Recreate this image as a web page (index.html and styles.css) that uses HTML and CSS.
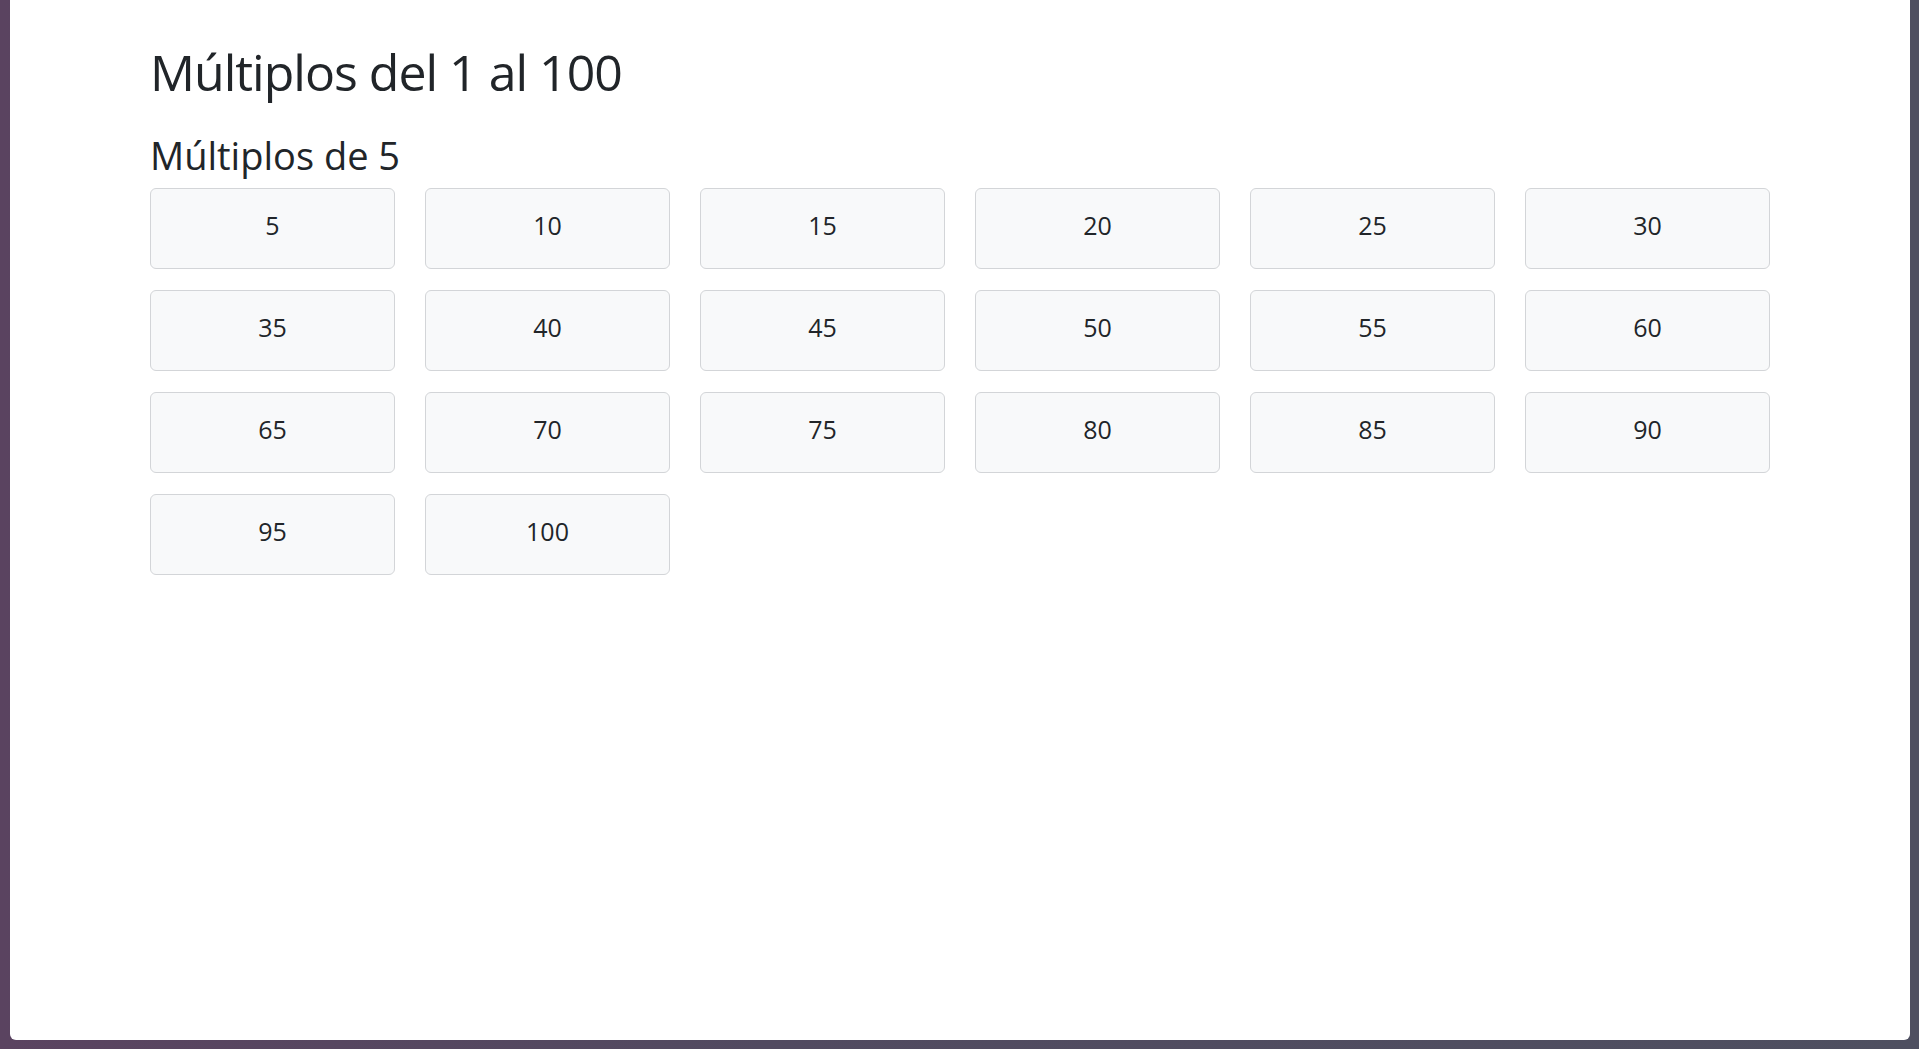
FILE: index.html
```html
<!DOCTYPE html>
<html lang="es">
<head>
<meta charset="utf-8">
<title>Múltiplos del 1 al 100</title>
<link rel="stylesheet" href="styles.css">
</head>
<body>
<div class="window">
  <main class="container">
    <h1 class="title">Múltiplos del 1 al 100</h1>
    <h3 class="subtitle">Múltiplos de 5</h3>
    <div class="grid">
      <button class="num">5</button>
      <button class="num">10</button>
      <button class="num">15</button>
      <button class="num">20</button>
      <button class="num">25</button>
      <button class="num">30</button>
      <button class="num">35</button>
      <button class="num">40</button>
      <button class="num">45</button>
      <button class="num">50</button>
      <button class="num">55</button>
      <button class="num">60</button>
      <button class="num">65</button>
      <button class="num">70</button>
      <button class="num">75</button>
      <button class="num">80</button>
      <button class="num">85</button>
      <button class="num">90</button>
      <button class="num">95</button>
      <button class="num">100</button>
    </div>
  </main>
</div>
</body>
</html>
```
FILE: styles.css
```css
html, body {
  margin: 0;
  padding: 0;
  height: 1049px;
  overflow: hidden;
}
body {
  background: linear-gradient(to right, #5a4360 0%, #514a60 40%, #4e4f60 100%);
  font-family: "Open Sans", "Noto Sans", sans-serif;
  color: #212529;
}
.window {
  margin: 0 9px 0 10px;
  height: 1040px;
  background: #ffffff;
  border-radius: 0 0 6px 6px;
}
.container {
  padding: 41.6px 0 0 140px;
}
.title {
  margin: 0;
  font-size: 50px;
  font-weight: 400;
  line-height: 60px;
  letter-spacing: -1px;
}
.subtitle {
  margin: 31.6px 0 9.5px 0;
  font-size: 38px;
  font-weight: 400;
  line-height: 45.6px;
}
.grid {
  display: grid;
  grid-template-columns: repeat(6, 245px);
  column-gap: 30px;
  row-gap: 21px;
}
.num {
  height: 81px;
  box-sizing: border-box;
  background: #f8f9fa;
  border: 1px solid #d3d5d8;
  border-radius: 6px;
  font-family: "Open Sans", "Noto Sans", sans-serif;
  font-size: 25px;
  color: #212529;
  display: flex;
  align-items: center;
  justify-content: center;
  padding: 0 0 8px 0;
}
```
